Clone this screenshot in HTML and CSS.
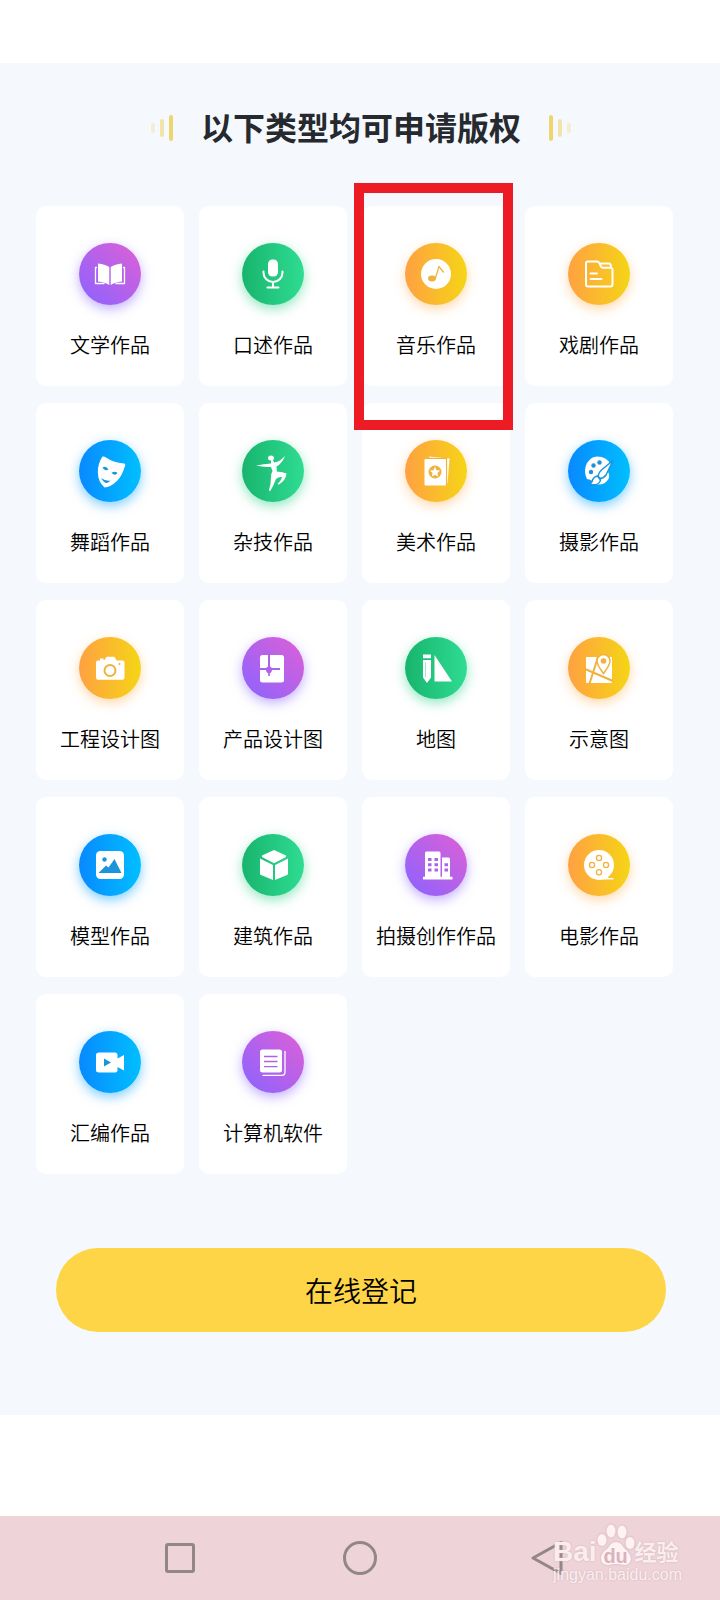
FILE: index.html
```html
<!DOCTYPE html>
<html lang="zh-CN">
<head>
  <meta charset="UTF-8" />
  <meta name="viewport" content="width=device-width, initial-scale=1.0"/>
  <title>版权登记</title>
  <link rel="stylesheet" href="styles.css">
</head>
<body>

  <main>
    <!-- Title -->
    <div class="title">
      <span class="bars"><i></i><i></i><i></i></span>
      <h1>以下类型均可申请版权</h1>
      <span class="bars flip"><i></i><i></i><i></i></span>
    </div>

    <!-- Work types -->
    <ul class="grid">
      <li class="card purple">
        <span class="icon"><svg viewBox="0 0 32 32">
          <path d="M4 5.500Q11 6 15.300 9V27Q11 24 4 23.500ZM28 5.500Q21 6 16.700 9V27Q21 24 28 23.500Z"/>
          <path class="line thin" d="M2.500 9.500H1.500V25.500H10M29.500 9.500H30.500V25.500H22"/>
        </svg></span>
        <p>文学作品</p>
      </li>
      <li class="card green">
        <span class="icon"><svg viewBox="0 0 32 32">
          <rect x="11" y="1.500" width="10" height="17" rx="4.500"/>
          <path class="line" d="M6.500 13.500V14.500A9.500 9.500 0 0 0 25.500 14.500V13.500M16 24V29.500M10.500 29.500H21.500"/>
        </svg></span>
        <p>口述作品</p>
      </li>
      <li class="card orange">
        <span class="icon"><svg viewBox="0 0 32 32">
          <circle cx="16" cy="16" r="15"/>
          <ellipse class="cut" cx="12" cy="20.500" rx="4" ry="3"/>
          <path class="cut-line thin" d="M15.300 20.500L19 8.500L23.800 14.500"/>
        </svg></span>
        <p>音乐作品</p>
        <span class="highlight"></span>
      </li>
      <li class="card orange">
        <span class="icon"><svg viewBox="0 0 32 32">
          <path class="line" d="M5 3.500H14Q15.500 3.500 16.300 5L18 8.500Q18.500 9.800 20 9.800H27.500Q29.500 9.800 29.500 12V26Q29.500 28.500 27.500 28.500H5Q3 28.500 3 26V5.500Q3 3.500 5 3.500ZM18 5.500H26Q28 5.500 28 9.500M7.500 15.500H14M7.500 21H18.500"/>
        </svg></span>
        <p>戏剧作品</p>
      </li>

      <li class="card blue">
        <span class="icon"><svg viewBox="0 0 32 32">
          <path d="M8.500 1.500Q10 1 12 2.500Q19 7.500 30 8.500Q32 9 31 11Q28 21 23 26Q16 32.500 10.500 32.500Q4 27 3.800 17Q4 8 8.500 1.500Z"/>
          <path class="cut" d="M8.500 12.500Q12 10.500 14.500 14.500Q10.500 16.500 8.500 12.500ZM17.500 18Q20.500 15.500 23.500 18Q21.500 21.500 17.500 18ZM7 23Q12 26.500 16.500 25.500Q12 31.500 7 23Z"/>
        </svg></span>
        <p>舞蹈作品</p>
      </li>
      <li class="card green">
        <span class="icon"><svg viewBox="0 0 32 32">
          <ellipse cx="14" cy="3" rx="3" ry="2.500"/>
          <path d="M14 5H16L17 7.500Q22 7.500 28 1Q25.500 8 19.500 11.500L19.800 16.500Q26 17 29.500 18.500Q29 25 22 29.500L20.500 29Q24.500 25 25 22Q21.500 21.500 19 24Q17 30 13 36.500L12 35Q14 29 14 22Q14 18.500 15.500 16L14 12Q8 12 -1 10.500Q7 9 14 8.500Z"/>
        </svg></span>
        <p>杂技作品</p>
      </li>
      <li class="card orange">
        <span class="icon"><svg viewBox="0 0 32 32">
          <path d="M9 1.500L29.500 3.500L27.500 28.500H20Z"/>
          <path class="cut-line thin" d="M8 3.300H26.500V30"/>
          <rect x="4.500" y="4" width="21.500" height="26.500" rx="1"/>
          <circle class="cut" cx="15" cy="17" r="6.500"/>
          <path d="M15 11.700L16.500 15.300L20.200 15.600L17.400 18L18.300 21.700L15 19.700L11.700 21.700L12.600 18L9.800 15.600L13.500 15.300Z"/>
        </svg></span>
        <p>美术作品</p>
      </li>
      <li class="card blue">
        <span class="icon"><svg viewBox="0 0 32 32">
          <path d="M14 1.500Q24 1.500 27 9L25 17Q27 20 25.500 24Q22 30 14.500 29.500Q10 29 8 25L4 24Q1 18 2.500 12Q5.500 2 14 1.500Z"/>
          <g class="cut">
            <circle cx="16.500" cy="7.500" r="2.200"/>
            <circle cx="10.500" cy="10.500" r="2.200"/>
            <circle cx="8" cy="17" r="2.200"/>
          </g>
          <path class="edged" d="M30 5.500L23 20Q21 23 17 23.500L15 21Q16 17 19 14.500Z"/>
          <path class="edged" d="M14.500 21L17.500 25Q16.500 31 6 29.500Q9 28.500 9.500 25Q11 21.500 14.500 21Z"/>
        </svg></span>
        <p>摄影作品</p>
      </li>

      <li class="card orange">
        <span class="icon"><svg viewBox="0 0 32 32">
          <path d="M6 6.500H9.500V8H10.500L12 5.500Q12.500 4.800 13.500 4.800H19.500Q20.500 4.800 21 5.500L22.500 8.500H28.500Q30.500 8.500 30.500 10.500V25.500Q30.500 27.800 28.500 27.800H4Q2 27.800 2 25.500V10.500Q2 8.500 4 8.500H6Z"/>
          <circle class="cut-line" cx="16" cy="18.500" r="5.500"/>
          <circle class="cut" cx="25.500" cy="12" r="1"/>
        </svg></span>
        <p>工程设计图</p>
      </li>
      <li class="card purple">
        <span class="icon"><svg viewBox="0 0 32 32">
          <rect x="3" y="3" width="24" height="27.500" rx="2.500"/>
          <path class="cut-line" d="M12 2V17M2 17H23"/>
          <path class="cut" d="M12 13.500L15.500 16.500Q15 20 12.800 21.500V24H11.200V21.500Q9 20 8.500 16.500Z"/>
        </svg></span>
        <p>产品设计图</p>
      </li>
      <li class="card green">
        <span class="icon"><svg viewBox="0 0 32 32">
          <path d="M3 2.500H11V6.300H3ZM3 8H11V25.500L7 31L3 25.500ZM14.500 3L32 29.500H14.500Z"/>
          <path class="cut-line faint" d="M5.500 10V25"/>
        </svg></span>
        <p>地图</p>
      </li>
      <li class="card orange">
        <span class="icon"><svg viewBox="0 0 32 32">
          <rect x="3" y="5" width="26" height="26" rx="1"/>
          <path class="cut-line" d="M2 17L30 29M15 4.500Q12.500 13.500 6.500 31.500"/>
          <path class="edged" d="M20.500 21.500Q14 13 14 9A6.500 6.500 0 0 1 27 9Q27 13 20.500 21.500Z"/>
          <circle class="cut" cx="20.500" cy="9" r="2.800"/>
        </svg></span>
        <p>示意图</p>
      </li>

      <li class="card blue">
        <span class="icon"><svg viewBox="0 0 32 32">
          <rect x="2" y="2" width="28" height="28" rx="4.500"/>
          <circle class="cut" cx="10.500" cy="10.500" r="2.200"/>
          <path class="cut" d="M4.500 24L12 16.500L14.500 18.500L20.500 10L27.500 24Z"/>
        </svg></span>
        <p>模型作品</p>
      </li>
      <li class="card green">
        <span class="icon"><svg viewBox="0 0 32 32">
          <path d="M17 1L29 6.500V8L17 14.300L5 8V6.500ZM3 9.500L16 16V31L4 26Q3 25.500 3 24.500ZM31 9.500L18 16V31L30 26Q31 25.500 31 24.500Z"/>
        </svg></span>
        <p>建筑作品</p>
      </li>
      <li class="card purple">
        <span class="icon"><svg viewBox="0 0 32 32">
          <path d="M5 27.800V4Q5 2.500 6.500 2.500H19Q20.500 2.500 20.500 4V27.800H22V8.500H28.500Q30 8.500 30 10V27.800H32.500V30.500H3V27.800Z"/>
          <path class="cut" d="M8 9H11.500V12H8ZM14.500 9H18V12H14.500ZM8 14.300H11.500V17.300H8ZM14.500 14.300H18V17.300H14.500ZM8 19.600H11.500V22.600H8ZM14.500 19.600H18V22.600H14.500ZM24.500 14.300H28V17.300H24.500ZM24.500 19.600H28V22.600H24.500Z"/>
        </svg></span>
        <p>拍摄创作作品</p>
      </li>
      <li class="card orange">
        <span class="icon"><svg viewBox="0 0 32 32">
          <circle cx="16" cy="16" r="15"/>
          <path d="M16 31Q22 30 25 27L25.500 29H30.500V30.500H22Z"/>
          <g class="cut-line thin">
            <circle cx="16" cy="9" r="2.600"/>
            <circle cx="9" cy="16" r="2.600"/>
            <circle cx="23" cy="16" r="2.600"/>
            <circle cx="16" cy="23.200" r="2.600"/>
          </g>
        </svg></span>
        <p>电影作品</p>
      </li>

      <li class="card blue">
        <span class="icon"><svg viewBox="0 0 32 32">
          <path d="M5 6.500H21Q23.500 6.500 23.500 9V12.500L30 9V24.500L23.500 21V24Q23.500 26.500 21 26.500H5Q2 26.500 2 24V9Q2 6.500 5 6.500Z"/>
          <path class="cut" d="M10 12.500L17 16.500L10 20.500Z"/>
        </svg></span>
        <p>汇编作品</p>
      </li>
      <li class="card purple">
        <span class="icon"><svg viewBox="0 0 32 32">
          <rect x="3" y="3.500" width="22" height="23" rx="2.500"/>
          <path class="cut-line thin" d="M7 10.500H20.500M7 15.500H20.500M7 20.700H20.500"/>
          <path class="line thin" d="M28 5.500V26Q28 29.300 25 29.300H6"/>
        </svg></span>
        <p>计算机软件</p>
      </li>
    </ul>

    <button class="submit" type="button">在线登记</button>
  </main>

  <!-- System navigation bar -->
  <nav>
    <button type="button" aria-label="最近任务"><svg viewBox="0 0 36 36"><rect x="4.500" y="4.500" width="27" height="27" rx="1.500"/></svg></button>
    <button type="button" aria-label="主页"><svg viewBox="0 0 36 36"><circle cx="18" cy="18" r="15.500"/></svg></button>
    <button class="back" type="button" aria-label="返回"><svg viewBox="0 0 36 36"><path d="M31 2.500V33.500L3 18Z"/></svg></button>
    <div class="watermark">
      <div class="brand">
        <span class="bai">Bai</span>
        <span class="paw">
          <svg viewBox="0 0 38 42">
            <ellipse cx="5" cy="16" rx="4.500" ry="6"/>
            <ellipse cx="14" cy="7" rx="4.500" ry="6.500"/>
            <ellipse cx="25" cy="8" rx="4.500" ry="6.500"/>
            <ellipse cx="33" cy="19" rx="4.500" ry="6"/>
            <path d="M19 18Q24 18 27 24Q34 30 34 35Q33 41 27 41Q19 39 11 41Q4 41 4 34Q4 29 11 24Q14 18 19 18Z"/>
          </svg>
          <b>du</b>
        </span>
        <span class="jingyan">经验</span>
      </div>
      <div class="site">jingyan.baidu.com</div>
    </div>
  </nav>

</body>
</html>
```

FILE: styles.css
```css
:root {
  --page: #f5f9fe;
  --yellow: #ffd548;
  --bar: #eed3d8;
  --mark: #ed1c24;
}

* {
  margin: 0;
  padding: 0;
  box-sizing: border-box;
}

body {
  min-height: 100vh;
  display: flex;
  flex-direction: column;
  justify-content: space-between;
  background: white;
  color: black;
  font-family: "Noto Sans CJK SC", sans-serif;
  font-weight: 350;
}

button {
  border: none;
  background: none;
  color: inherit;
  font-family: inherit;
  font-weight: inherit;
  cursor: pointer;
}

main {
  margin-top: 63px;
  padding: 39px 0 83px;
  background: var(--page);
}

/* Title */
.title {
  display: flex;
  justify-content: center;
  align-items: center;
  gap: 28px;
  margin-bottom: 56px;
  padding-left: 2px;
}

.title h1 {
  font-size: 32px;
  line-height: 48px;
  font-weight: bold;
  color: #26292d;
}

.bars {
  display: flex;
  align-items: center;
  gap: 5px;
  padding-top: 4px;
}

.bars.flip {
  flex-direction: row-reverse;
}

.bars i {
  width: 4px;
  height: 26px;
  border-radius: 2px;
  background: #eed56f;
}

.bars i:nth-child(1) {
  height: 10px;
  opacity: 0.3;
}

.bars i:nth-child(2) {
  height: 18px;
  opacity: 0.6;
}

/* Cards */
.grid {
  list-style: none;
  display: grid;
  grid-template-columns: repeat(4, 1fr);
  gap: 17px 15px;
  padding: 0 47px 0 36px;
}

.card {
  position: relative;
  display: flex;
  flex-direction: column;
  align-items: center;
  gap: 26px;
  padding: 37px 0 27px;
  border-radius: 10px;
  background: white;
}

.card p {
  font-size: 20px;
  line-height: 28px;
  white-space: nowrap;
}

.icon {
  width: 62px;
  height: 62px;
  display: flex;
  justify-content: center;
  align-items: center;
  border-radius: 50%;
  background: var(--grad);
  box-shadow: 0 4px 12px var(--glow);
}

.icon svg {
  width: 32px;
  height: 32px;
  overflow: visible;
  fill: white;
}

.icon .line {
  fill: none;
  stroke: white;
  stroke-width: 2;
  stroke-linecap: round;
  stroke-linejoin: round;
}

.icon .cut {
  fill: var(--ink);
}

.icon .cut-line {
  fill: none;
  stroke: var(--ink);
  stroke-width: 2;
}

.icon .edged {
  stroke: var(--ink);
  stroke-width: 1.5;
}

.icon .thin {
  stroke-width: 1.3;
}

.icon .faint {
  stroke-width: 1;
  opacity: 0.4;
}

.purple {
  --grad: linear-gradient(45deg, #8a63ff, #de60d6);
  --ink: #ad62ea;
  --glow: rgba(138, 99, 255, 0.5);
}

.green {
  --grad: linear-gradient(90deg, #18b46e, #2fdc92);
  --ink: #24c47f;
  --glow: rgba(40, 210, 135, 0.5);
}

.orange {
  --grad: linear-gradient(90deg, #ffa142, #f5d516);
  --ink: #f0b23c;
  --glow: rgba(255, 170, 70, 0.45);
}

.blue {
  --grad: linear-gradient(90deg, #0889ff, #00bfff);
  --ink: #1c94dc;
  --glow: rgba(0, 160, 255, 0.5);
}

.highlight {
  position: absolute;
  z-index: 1;
  top: -23px;
  right: -3px;
  bottom: -44px;
  left: -8px;
  border: 10px solid var(--mark);
}

.submit {
  display: block;
  width: calc(100% - 110px);
  margin: 74px 54px 0 56px;
  padding: 21px 0;
  border-radius: 42px;
  background: var(--yellow);
  font-size: 28px;
  line-height: 42px;
}

/* Navigation bar */
nav {
  position: relative;
  display: flex;
  justify-content: center;
  gap: 144px;
  padding: 24px 0 24px 8px;
  background: var(--bar);
}

nav button,
nav button svg {
  display: block;
  width: 36px;
  height: 36px;
}

nav .back {
  margin-left: 8px;
}

nav button svg {
  fill: none;
  stroke: #928688;
  stroke-width: 3;
  stroke-linejoin: round;
}

.watermark {
  position: absolute;
  right: 38px;
  bottom: 16px;
  color: rgba(255, 246, 248, 0.9);
  text-shadow: 0 0 2px #cfaeb4;
  font-family: "Liberation Sans", "Noto Sans CJK SC", sans-serif;
}

.brand {
  display: flex;
  align-items: flex-end;
  height: 42px;
}

.bai {
  font-size: 28px;
  line-height: 28px;
  font-weight: bold;
}

.paw {
  position: relative;
  width: 38px;
  height: 42px;
}

.paw svg {
  display: block;
  fill: #fff2f4;
  filter: drop-shadow(0 0 1px #cfaeb4);
}

.paw b {
  position: absolute;
  right: 0;
  bottom: 0;
  left: 0;
  text-align: center;
  font-size: 20px;
  line-height: 20px;
  color: #d9b3bb;
  text-shadow: none;
}

.jingyan {
  font-size: 22px;
  line-height: 26px;
  font-weight: bold;
}

.site {
  font-size: 16px;
  line-height: 18px;
}
```
